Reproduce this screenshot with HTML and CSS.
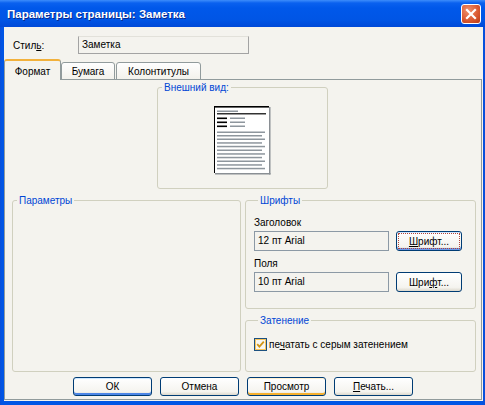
FILE: index.html
```html
<!DOCTYPE html>
<html lang="ru">
<head>
  <meta charset="UTF-8" />
  <title>Параметры страницы: Заметка</title>
  <link rel="stylesheet" href="styles.css">
</head>
<body>
  <div class="window">
    <div class="titlebar">
      <span class="title">Параметры страницы: Заметка</span>
      <span class="close">
        <svg width="18" height="18" viewBox="0 0 18 18"><path d="M5 5 L13 13 M13 5 L5 13" stroke="#fff" stroke-width="2.2" stroke-linecap="square"/></svg>
      </span>
    </div>

    <div class="client">
      <div class="style-row">
        <span class="lbl">Стил<u>ь</u>:</span>
        <div class="static">Заметка</div>
      </div>

      <div class="tabs">
        <div class="tab active">Формат</div>
        <div class="tab paper">Бумага</div>
        <div class="tab headers">Колонтитулы</div>
      </div>

      <div class="pane">
        <fieldset class="group preview">
          <legend>Внешний вид:</legend>
          <svg class="page" width="57" height="69" viewBox="0 0 57 69">
            <rect x="0" y="0" width="55" height="67" fill="#fff"/>
            <rect x="55" y="1" width="1.5" height="67.5" fill="#8a8f94"/>
            <rect x="1" y="67" width="55.5" height="1.5" fill="#8a8f94"/>
            <rect x="0" y="0" width="55" height="1.6" fill="#000"/>
            <rect x="0" y="0" width="1" height="67" fill="#000"/>
            <rect x="3" y="4.5" width="21" height="1.5" fill="#8e969d"/>
            <rect x="3" y="7.2" width="49" height="1.2" fill="#000"/>
            <rect x="3" y="11.5" width="10" height="1.6" fill="#000"/>
            <rect x="16" y="11.5" width="15" height="1.5" fill="#8e969d"/>
            <rect x="3" y="15.5" width="10" height="1.6" fill="#000"/>
            <rect x="16" y="15.5" width="15" height="1.5" fill="#8e969d"/>
            <rect x="3" y="19.5" width="10" height="1.6" fill="#000"/>
            <rect x="16" y="19.5" width="15" height="1.5" fill="#8e969d"/>
            <rect x="3" y="25.5" width="48" height="1.5" fill="#8e969d"/>
            <rect x="3" y="29" width="45" height="1.5" fill="#8e969d"/>
            <rect x="3" y="32.5" width="48" height="1.5" fill="#8e969d"/>
            <rect x="3" y="36.2" width="45" height="1.5" fill="#8e969d"/>
            <rect x="3" y="39.8" width="48" height="1.5" fill="#8e969d"/>
            <rect x="3" y="43.5" width="45" height="1.5" fill="#8e969d"/>
            <rect x="3" y="47.2" width="48" height="1.5" fill="#8e969d"/>
            <rect x="3" y="50.8" width="45" height="1.5" fill="#8e969d"/>
            <rect x="3" y="54.5" width="48" height="1.5" fill="#8e969d"/>
            <rect x="3" y="58.2" width="45" height="1.5" fill="#8e969d"/>
            <rect x="3" y="61.8" width="48" height="1.5" fill="#8e969d"/>
          </svg>
        </fieldset>

        <div class="columns">
          <fieldset class="group params">
            <legend>Параметры</legend>
          </fieldset>

          <div class="right-col">
            <fieldset class="group fonts">
              <legend>Шрифты</legend>
              <div class="field-lbl">Заголовок</div>
              <div class="field-row">
                <div class="field">12 пт Arial</div>
                <button class="btn focused"><u>Ш</u>рифт...</button>
              </div>
              <div class="field-lbl">Поля</div>
              <div class="field-row">
                <div class="field">10 пт Arial</div>
                <button class="btn">Шри<u>ф</u>т...</button>
              </div>
            </fieldset>

            <fieldset class="group shade">
              <legend>Затенение</legend>
              <div class="check-row">
                <svg class="check" width="13" height="13" viewBox="0 0 13 13">
                  <rect x="0.5" y="0.5" width="12" height="12" fill="#f7f6f1" stroke="#1c5180"/>
                  <rect x="1.5" y="1.5" width="10" height="10" fill="none" stroke="#f9c55d"/>
                  <path d="M3.2 6.2 L5.4 8.6 L9.8 3.6" fill="none" stroke="#d19514" stroke-width="1.8"/>
                </svg>
                <span>пе<u>ч</u>атать с серым затенением</span>
              </div>
            </fieldset>
          </div>
        </div>

        <div class="buttons">
          <button class="btn default">ОК</button>
          <button class="btn">Отмена</button>
          <button class="btn hover">Просмотр</button>
          <button class="btn"><u>П</u>ечать...</button>
        </div>
      </div>
    </div>
  </div>
</body>
</html>
```

FILE: styles.css
```css
body {
  margin: 0;
  font-family: "Liberation Sans", Arial, sans-serif;
  font-size: 10px;
  color: #000;
  background: #fff;
}
.window {
  width: 485px;
  height: 405px;
  display: flex;
  flex-direction: column;
  background: linear-gradient(90deg, #0a4ed8 0, #0055e5 2px, #0055e5 481px, #0a4ed8 485px);
  overflow: hidden;
}
.titlebar {
  height: 27px;
  flex: none;
  display: flex;
  align-items: center;
  justify-content: space-between;
  padding: 0 4px 0 7px;
  background: linear-gradient(#3d8dfb 0, #0a61ef 3px, #0058ea 8px, #0055e5 20px, #0049d8 27px);
  color: #fff;
  font-weight: bold;
  font-size: 11.5px;
}
.title {
  text-shadow: 1px 1px #0b2a8a;
}
.close {
  width: 18px;
  height: 18px;
  border: 1px solid #fff;
  border-radius: 3px;
  background: radial-gradient(circle at 35% 30%, #f0906c, #d9572f 60%, #b83a17);
  display: flex;
}
.client {
  flex: 1;
  margin: 0 2px 4px 4px;
  background: #f4f3ee;
  display: flex;
  flex-direction: column;
}
.style-row {
  display: flex;
  align-items: center;
  margin: 9px 0 0 9px;
  height: 18px;
}
.style-row .lbl {
  width: 65px;
}
.static {
  width: 171px;
  height: 18px;
  box-sizing: border-box;
  border: 1px solid #a3a3a3;
  border-top-color: #e2e1da;
  padding-left: 3px;
  line-height: 16px;
}
.tabs {
  display: flex;
  align-items: flex-end;
  margin-top: 5px;
  margin-bottom: -1px;
  height: 21px;
}
.tab {
  box-sizing: border-box;
  height: 18px;
  border: 1px solid #919b9c;
  border-radius: 3px 3px 0 0;
  background: linear-gradient(#fefefe, #f3f2ec);
  text-align: center;
  line-height: 13px;
  padding-top: 2px;
}
.tab.active {
  position: relative;
  z-index: 1;
  width: 57px;
  height: 21px;
  border-bottom: none;
  border-top: 2px solid #f2b13c;
  background: #f4f3ee;
  padding-top: 4px;
}
.tab.paper {
  width: 54px;
  margin-right: 1px;
}
.tab.headers {
  width: 85px;
}
.pane {
  flex: 1;
  margin: 0 1px 1px 0;
  border: 1px solid #919b9c;
  display: flex;
  flex-direction: column;
}
.group {
  margin: 0;
  padding: 0;
  box-sizing: border-box;
  border: 1px solid #d0d0bf;
  border-radius: 3px;
  min-width: 0;
}
.group legend {
  color: #0046d5;
  line-height: 13px;
  padding: 0 2px;
  margin-left: 4px;
}
.preview {
  width: 171px;
  height: 108px;
  margin: 1px 0 0 152px;
  padding-top: 12px;
}
.preview .page {
  display: block;
  margin: 0 auto;
}
.columns {
  display: flex;
  gap: 4px;
  margin: 5px 0 0 7px;
  height: 178px;
}
.params {
  width: 229px;
  height: 178px;
}
.right-col {
  width: 231px;
  display: flex;
  flex-direction: column;
  gap: 5px;
}
.fonts {
  height: 115px;
  padding: 9px 0 0 8px;
}
.field-lbl {
  line-height: 13px;
  margin-bottom: 2px;
}
.field-row {
  display: flex;
  align-items: center;
  gap: 7px;
  margin-bottom: 6px;
}
.field {
  width: 135px;
  height: 20px;
  box-sizing: border-box;
  border: 1px solid #8c99a5;
  padding-left: 3px;
  line-height: 18px;
}
.shade {
  flex: 1;
  padding: 11px 0 0 8px;
}
.check-row {
  display: flex;
  align-items: center;
  gap: 2px;
}
.check {
  display: block;
}
.btn {
  box-sizing: border-box;
  width: 66px;
  height: 20px;
  padding: 0;
  font-family: inherit;
  font-size: 10px;
  color: #000;
  border: 1px solid #003c74;
  border-radius: 3px;
  background: linear-gradient(#ffffff, #f5f4ef 80%, #dcd8cd);
}
.btn.focused {
  box-shadow: inset 0 -2px #6d9bec, inset 0 1px #cee7ff;
  outline: 1px dotted #b0453a;
  outline-offset: -3px;
}
.btn.default {
  box-shadow: inset 0 -2px #4d86e6, inset 0 1px #cee7ff;
}
.btn.hover {
  box-shadow: inset 0 -2px #f6b02e, inset 0 1px #fff0cf;
}
.buttons {
  display: flex;
  gap: 8px;
  margin: 5px 0 0 68px;
}
.buttons .btn {
  width: 79px;
  height: 19px;
}
```
